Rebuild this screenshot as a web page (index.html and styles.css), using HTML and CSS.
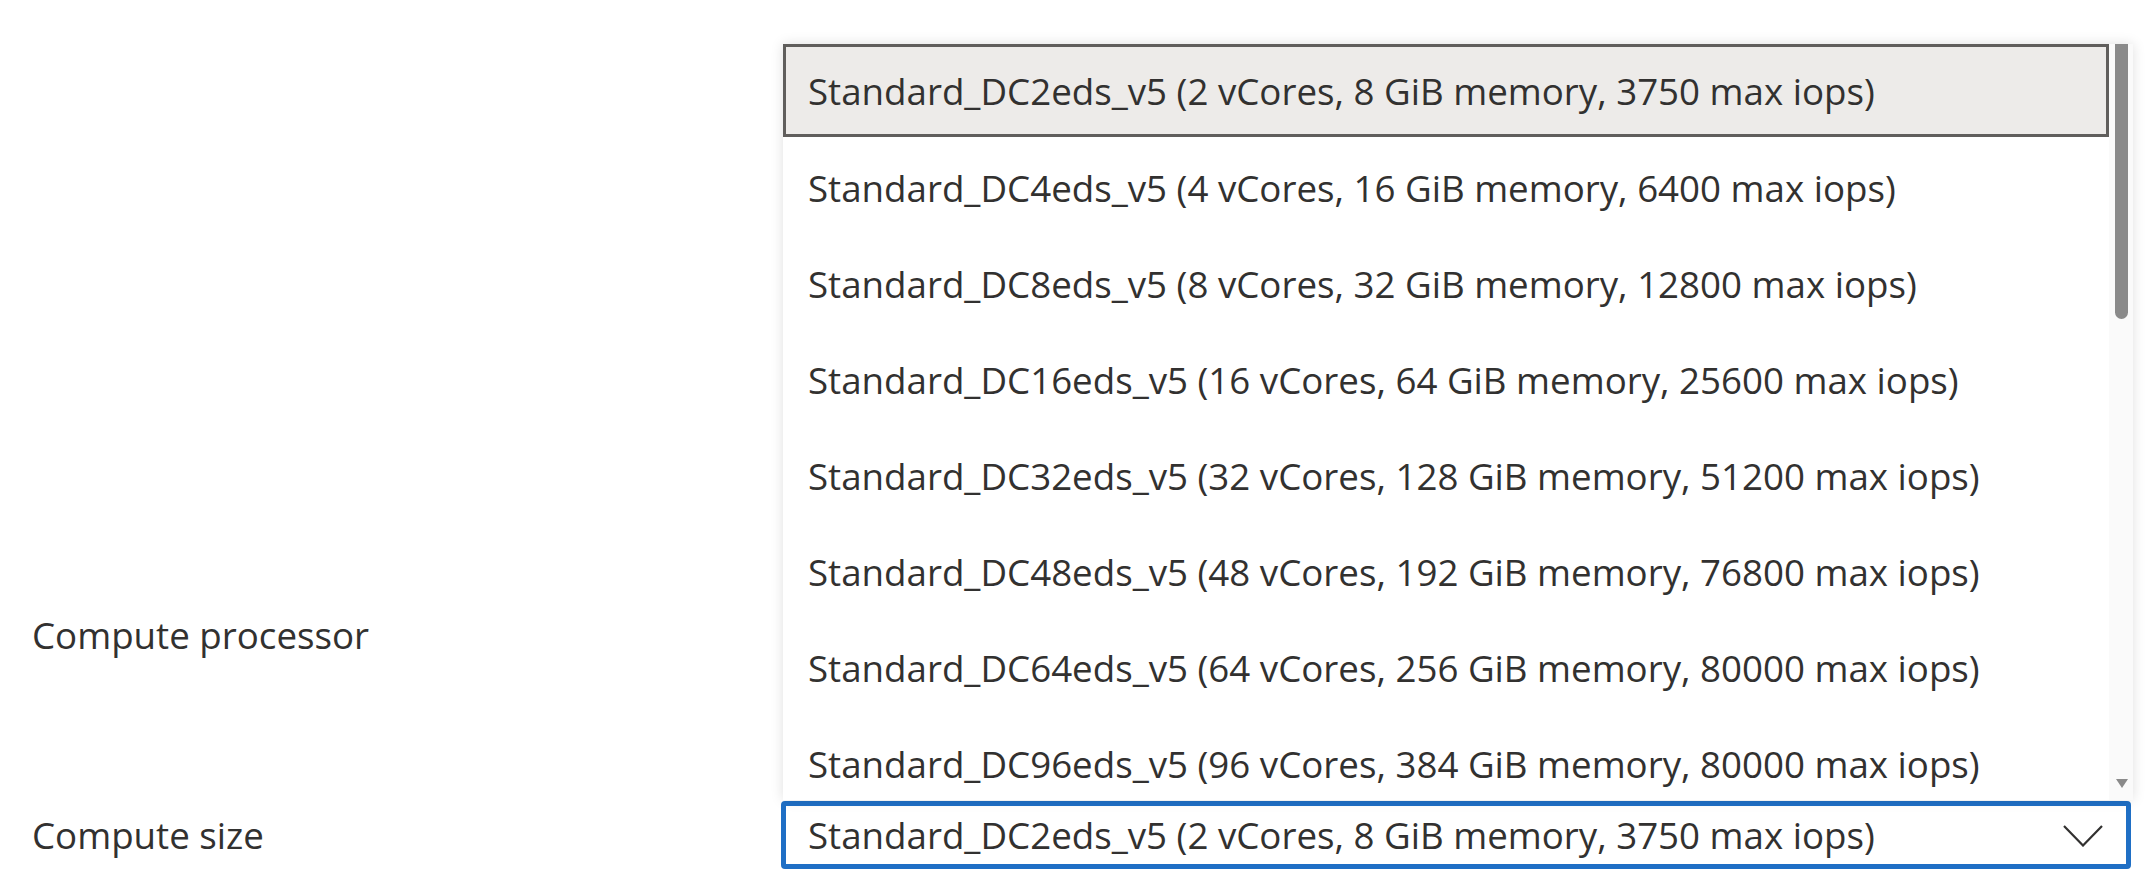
FILE: index.html
```html
<!DOCTYPE html>
<html lang="en">
<head>
    <meta charset="UTF-8">
    <title>Compute size</title>
    <link rel="stylesheet" href="styles.css">
</head>
<body>
    <div class="form">
        <div class="field-label">Compute processor</div>
        <div class="field-control"></div>

        <div class="field-label">Compute size</div>
        <div class="field-control">
            <div class="dropdown">
                <div class="dropdown-title">
                    <span>Standard_DC2eds_v5 (2 vCores, 8 GiB memory, 3750 max iops)</span>
                    <svg class="chevron" width="40" height="22" viewBox="0 0 40 22">
                        <polyline points="1,1 20,20.5 39,1" fill="none" stroke="#323130" stroke-width="2.2"/>
                    </svg>
                </div>

                <!-- open listbox, drawn above the control -->
                <div class="listbox">
                    <div class="options">
                        <div class="option selected">Standard_DC2eds_v5 (2 vCores, 8 GiB memory, 3750 max iops)</div>
                        <div class="option">Standard_DC4eds_v5 (4 vCores, 16 GiB memory, 6400 max iops)</div>
                        <div class="option">Standard_DC8eds_v5 (8 vCores, 32 GiB memory, 12800 max iops)</div>
                        <div class="option">Standard_DC16eds_v5 (16 vCores, 64 GiB memory, 25600 max iops)</div>
                        <div class="option">Standard_DC32eds_v5 (32 vCores, 128 GiB memory, 51200 max iops)</div>
                        <div class="option">Standard_DC48eds_v5 (48 vCores, 192 GiB memory, 76800 max iops)</div>
                        <div class="option">Standard_DC64eds_v5 (64 vCores, 256 GiB memory, 80000 max iops)</div>
                        <div class="option">Standard_DC96eds_v5 (96 vCores, 384 GiB memory, 80000 max iops)</div>
                    </div>
                    <div class="scrollbar">
                        <div class="thumb"></div>
                        <div class="arrow-down"></div>
                    </div>
                </div>
            </div>
        </div>
    </div>
</body>
</html>
```

FILE: styles.css
```css
* {
    margin: 0;
    padding: 0;
    box-sizing: border-box;
}

body {
    font-family: 'Segoe UI', 'Open Sans', sans-serif;
    font-size: 36.7px;
    color: #323130;
    background: #fff;
    overflow: hidden;
}

.form {
    display: grid;
    grid-template-columns: 749px 1350px;
    grid-template-rows: 68px 68px;
    row-gap: 132px;
    padding: 601px 0 0 32px;
}

.field-label {
    display: flex;
    align-items: center;
    white-space: nowrap;
}

.field-control {
    position: relative;
}

.dropdown {
    position: relative;
    height: 68px;
}

.dropdown-title {
    height: 68px;
    border: 5px solid #1f6fc5;
    border-radius: 4px;
    padding: 0 23px 0 22px;
    display: flex;
    align-items: center;
    justify-content: space-between;
    white-space: nowrap;
}

.chevron {
    display: block;
    margin-top: 2px;
}

.listbox {
    position: absolute;
    left: 2px;
    bottom: 69px;
    width: 1350px;
    height: 756px;
    background: #fff;
    display: flex;
    box-shadow: 0 0 12px rgba(0, 0, 0, 0.13);
    overflow: hidden;
}

.options {
    flex: 1;
    overflow: hidden;
}

.option {
    height: 96px;
    padding-left: 25px;
    display: flex;
    align-items: center;
    white-space: nowrap;
}

.option.selected {
    height: 93px;
    margin-bottom: 3px;
    padding-left: 22px;
    background: #edebe9;
    border: 3px solid #605e5c;
}

.scrollbar {
    width: 24px;
    padding: 0 5px 0 6px;
    background: #fafafa;
    display: flex;
    flex-direction: column;
    align-items: center;
}

.thumb {
    width: 13px;
    height: 275px;
    background: #8a8a8a;
    border-radius: 0 0 7px 7px;
}

.arrow-down {
    margin-top: auto;
    margin-bottom: 12px;
    width: 0;
    height: 0;
    border-left: 6px solid transparent;
    border-right: 6px solid transparent;
    border-top: 9px solid #8a8a8a;
}
```
